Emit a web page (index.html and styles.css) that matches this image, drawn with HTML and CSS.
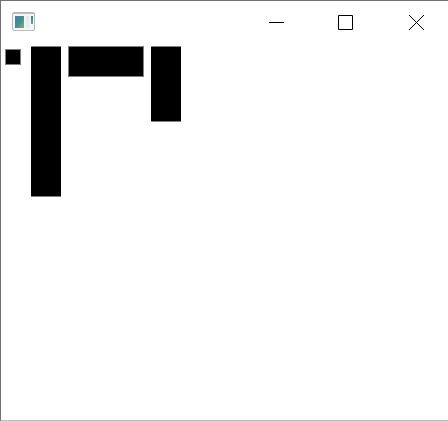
FILE: index.html
```html
<!DOCTYPE html>
<html lang="en">
<head>
<meta charset="utf-8">
<link rel="stylesheet" href="styles.css">
</head>
<body>
<div class="window">
  <header class="titlebar">
    <svg class="app-icon" width="23" height="20" viewBox="0 0 23 20">
      <defs>
        <linearGradient id="pane" x1="0" y1="0" x2="1" y2="1">
          <stop offset="0" stop-color="#4a7da8"/>
          <stop offset=".5" stop-color="#448f8c"/>
          <stop offset="1" stop-color="#6ab87a"/>
        </linearGradient>
        <linearGradient id="strip" x1="0" y1="0" x2="0" y2="1">
          <stop offset="0" stop-color="#47749c"/>
          <stop offset="1" stop-color="#62a783"/>
        </linearGradient>
      </defs>
      <rect x=".5" y=".5" width="22" height="18" rx="1.5" fill="#f5f6f7" stroke="#b4b8bd"/>
      <path d="M1 1.5h21M1 18.5h21" stroke="#b9bdc2"/>
      <rect x="3" y="4" width="9" height="12" fill="url(#pane)"/>
      <rect x="13.5" y="4" width="4" height="12" fill="#e9eaec"/>
      <rect x="19" y="4" width="2" height="8" fill="url(#strip)"/>
    </svg>
    <nav class="controls">
      <svg width="15" height="15" viewBox="0 0 15 15"><path d="M0 7.5h15" stroke="#000"/></svg>
      <svg width="15" height="15" viewBox="0 0 15 15"><path d="M.5 .5h14v14H.5z" fill="none" stroke="#000"/></svg>
      <svg width="15" height="15" viewBox="0 0 15 15"><path d="M0 0l15 15M15 0L0 15" stroke="#000"/></svg>
    </nav>
  </header>
  <main class="content">
    <div class="block dot"></div>
    <div class="block tall"></div>
    <div class="block wide"></div>
    <div class="block short"></div>
  </main>
</div>
</body>
</html>
```

FILE: styles.css
```css
body {
  margin: 0;
  background: #fff;
}

.window {
  box-sizing: border-box;
  height: 421px;
  border: solid #707070;
  border-width: 1px 0 1px 1px;
  border-bottom-color: #bdbdbd;
  overflow: hidden;
}

.titlebar {
  display: flex;
  justify-content: space-between;
  align-items: flex-start;
  box-sizing: border-box;
  height: 45px;
  padding: 11px 24px 0 11px;
}

.app-icon,
.controls svg {
  display: block;
}

.controls {
  display: flex;
  padding-top: 3px;
}

.controls svg:nth-child(2) {
  margin: 0 56px 0 54px;
}

.content {
  display: flex;
  align-items: flex-start;
}

.block {
  box-sizing: border-box;
  background: #000;
  border: solid #808080;
  border-width: 1px 0;
}

.dot {
  width: 16px;
  height: 16px;
  margin: 3px 10px 0 4px;
  border-width: 1px;
}

.tall {
  width: 30px;
  height: 151px;
}

.wide {
  width: 76px;
  height: 31px;
  margin: 0 7px;
  border-width: 1px;
}

.short {
  width: 30px;
  height: 76px;
}
```
